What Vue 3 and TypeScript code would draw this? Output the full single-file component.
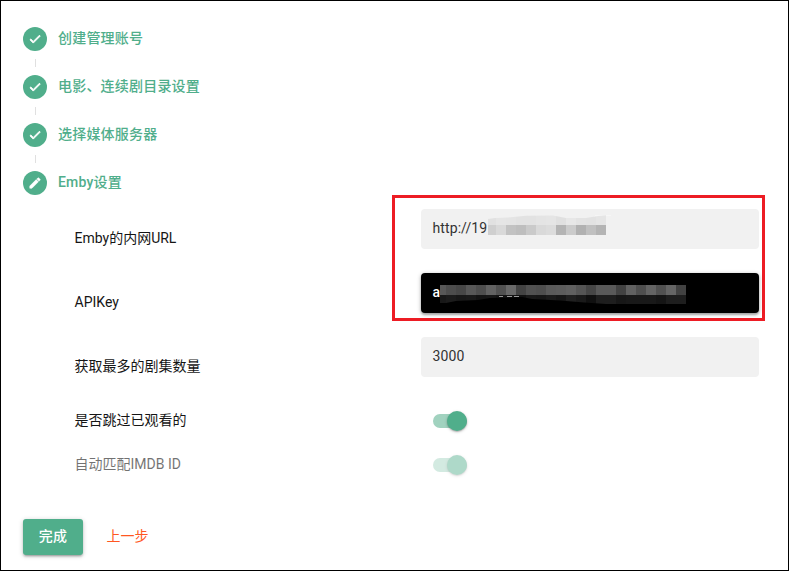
<script setup lang="ts">
import { ref } from 'vue'

interface Step {
  title: string
  icon: 'check' | 'edit'
}
interface Tile {
  x: number
  w: number
  c: string
}

const steps: Step[] = [
  { title: '创建管理账号', icon: 'check' },
  { title: '电影、连续剧目录设置', icon: 'check' },
  { title: '选择媒体服务器', icon: 'check' },
  { title: 'Emby设置', icon: 'edit' },
]

const icons = {
  check: 'M9 16.17L4.83 12l-1.42 1.41L9 19 21 7l-1.41-1.41z',
  edit: 'M3 17.25V21h3.75L17.81 9.94l-3.75-3.75L3 17.25zM20.71 7.04c.39-.39.39-1.02 0-1.41l-2.34-2.34a.9959.9959 0 0 0-1.41 0l-1.83 1.83 3.75 3.75 1.83-1.83z',
}

const skipWatched = ref(true)
const matchImdb = ref(true)

// The first tile has its own width; every following one is 10px wide.
function tiles(first: number, shades: string[]): Tile[] {
  let x = 0
  return shades.map((s, i) => {
    const w = i === 0 ? first : 10
    const tile = { x, w, c: `#${s}${s}${s}` }
    x += w
    return tile
  })
}

const urlTiles = tiles(8, ['cf', 'd9', 'c2', 'be', 'ca', 'd9', 'dc', 'b4', 'cb', 'b1', 'c0', 'b4'])
const urlUpper = tiles(8, ['e1', 'e5', 'e4', 'e2', 'e2', 'e4', 'e5', 'e0', 'e7', 'e3', 'e2', 'e5'])
const keyTiles = tiles(6, ['58', '4d', '47', '58', '4e', '62', '51', '69', '43', '51', '4e', '5a', '5c', '60', '55', '46', '59', '59', '42', '61', '4f', '64', '51', '65', '42'])
const keyLower = tiles(6, ['18', '1c', '18', '1a', '14', '16', '12', '14', '10', '18', '16', '1b', '16', '20', '1a', '10', '1e', '1e', '17', '19', '19', '19', '15', '1e', '1e'])
</script>

<template>
  <main class="page">
    <ol class="steps">
      <li v-for="step in steps" :key="step.title" class="step">
        <span class="dot">
          <svg :class="step.icon" viewBox="0 0 24 24"><path :d="icons[step.icon]" /></svg>
        </span>
        <span class="title">{{ step.title }}</span>
      </li>
    </ol>

    <section class="form">
      <div class="row">
        <span class="label">Emby的内网URL</span>
      </div>
      <div class="row">
        <span class="label">APIKey</span>
      </div>
      <div class="row">
        <span class="label">获取最多的剧集数量</span>
        <div class="field"><span>3000</span></div>
      </div>
      <div class="row compact">
        <span class="label">是否跳过已观看的</span>
        <button class="toggle" :class="{ on: skipWatched }" @click="skipWatched = !skipWatched">
          <i class="thumb"></i>
        </button>
      </div>
      <div class="row compact disabled">
        <span class="label">自动匹配IMDB ID</span>
        <button class="toggle" :class="{ on: matchImdb }" disabled><i class="thumb"></i></button>
      </div>
      <div class="highlight">
        <div class="field">
          <span>http://19</span>
          <svg class="mask url-mask" width="130" height="20" viewBox="0 0 130 20" shape-rendering="crispEdges">
            <clipPath id="url-edge">
              <path d="M0 4L7 3L20 2.6L38 .8L65 .5L78 3L98 3L110 1L118 .3V10H0z" />
            </clipPath>
            <path d="M108 0H125L118 1.5H106z" fill="#f6f6f6" />
            <g clip-path="url(#url-edge)">
              <rect v-for="t in urlUpper" :key="t.x" :x="t.x" y="0" :width="t.w" height="10" :fill="t.c" />
            </g>
            <rect v-for="t in urlTiles" :key="t.x" :x="t.x" y="10" :width="t.w" height="10" :fill="t.c" />
          </svg>
        </div>
        <div class="field dark">
          <span>a</span>
          <svg class="mask key-mask" width="246" height="19" viewBox="0 0 246 19" shape-rendering="crispEdges">
            <clipPath id="key-edge">
              <path d="M0 10H246V19H166L144 17.5L120 15.5L92 14L82 12L50 13L38 15L16 16L6 18H0z" />
            </clipPath>
            <g clip-path="url(#key-edge)">
              <rect v-for="t in keyLower" :key="t.x" :x="t.x" y="10" :width="t.w" height="9" :fill="t.c" />
            </g>
            <rect v-for="t in keyTiles" :key="t.x" :x="t.x" y="0" :width="t.w" height="10" :fill="t.c" />
            <path d="M59 11.5h4M67 11.5h5M74 11.5h5" stroke="#999" />
          </svg>
        </div>
      </div>
    </section>

    <footer class="actions">
      <button class="primary">完成</button>
      <button class="flat">上一步</button>
    </footer>
  </main>
</template>

<style>
body {
  margin: 0;
  background: #fff;
}
</style>

<style scoped>
.page {
  box-sizing: border-box;
  width: 789px;
  height: 571px;
  border: 1px solid #000;
  padding: 26px 29px 15px 22px;
  background: #fff;
  color: #151515;
  font-family: Roboto, 'Noto Sans CJK SC', sans-serif;
  font-size: 14px;
  line-height: 20px;
  display: flex;
  flex-direction: column;
}
button {
  border: 0;
  margin: 0;
  padding: 0;
  background: none;
  font: inherit;
}
.steps {
  list-style: none;
  margin: 0;
  padding: 0;
  display: flex;
  flex-direction: column;
  gap: 24px;
}
.step {
  position: relative;
  display: flex;
  align-items: center;
  gap: 11px;
  height: 24px;
  color: #50ae8b;
  font-weight: 500;
  letter-spacing: 0.2px;
}
.step:not(:last-child)::after {
  content: '';
  position: absolute;
  left: 12px;
  top: 32px;
  width: 1px;
  height: 8px;
  background: #e0e0e0;
}
.dot {
  width: 24px;
  height: 24px;
  border-radius: 50%;
  background: #50ae8b;
  display: flex;
  align-items: center;
  justify-content: center;
}
.dot svg {
  width: 14px;
  height: 14px;
  fill: #fff;
  stroke: #fff;
}
.dot .check {
  stroke-width: 1.6;
}
.dot .edit {
  stroke-width: 0.9;
}
.title {
  position: relative;
  top: -1px;
}
.form {
  position: relative;
  display: flex;
  flex-direction: column;
  margin-top: 14px;
  padding-left: 51.5px;
}
.row {
  display: grid;
  grid-template-columns: 346.5px 338px;
  height: 40px;
  margin-bottom: 24px;
}
.label {
  padding-top: 19px;
}
.row.compact {
  height: 40px;
  margin-bottom: 4px;
}
.row.compact .label {
  padding-top: 9px;
}
.row.disabled .label {
  opacity: 0.6;
}
.row.disabled .toggle {
  opacity: 0.46;
}
.field {
  position: relative;
  box-sizing: border-box;
  height: 40px;
  padding: 9px 11.5px;
  border-radius: 4px;
  background: #f1f1f1;
  color: #333;
  letter-spacing: 0.1px;
}
.field.dark {
  background: #000;
  color: #fff;
  box-shadow: 0 1px 4px rgba(0, 0, 0, 0.3), 0 2px 2px rgba(0, 0, 0, 0.2);
}
.dark span {
  font-weight: 500;
}
.highlight {
  position: absolute;
  left: 369px;
  top: -14px;
  box-sizing: border-box;
  width: 373px;
  height: 126px;
  border: 3px solid #ed1c24;
  padding: 11px 3px 0 26px;
  display: flex;
  flex-direction: column;
  gap: 24px;
}
.mask {
  position: absolute;
}
.url-mask {
  left: 67px;
  top: 6px;
}
.key-mask {
  left: 19px;
  top: 12px;
}
.toggle {
  position: relative;
  width: 34px;
  height: 14px;
  margin: 13px 0 0 12px;
  border-radius: 7px;
  background: #bbb;
}
.toggle.on {
  background: #a1d2bf;
}
.thumb {
  position: absolute;
  left: 0;
  top: -3px;
  width: 20px;
  height: 20px;
  border-radius: 50%;
  background: #fff;
  box-shadow: 0 1px 3px rgba(0, 0, 0, 0.25), 0 1px 1px rgba(0, 0, 0, 0.14);
}
.toggle.on .thumb {
  left: 14px;
  background: #50ae8b;
}
.actions {
  display: flex;
  margin-top: auto;
  gap: 8px;
}
.actions button {
  height: 36px;
  padding: 0 15px 2px;
  border-radius: 3px;
  font-weight: 500;
  letter-spacing: 0.2px;
  white-space: nowrap;
}
.actions .primary {
  width: 60px;
  background: #50ae8b;
  color: #fff;
  box-shadow: 0 1px 5px rgba(0, 0, 0, 0.2), 0 2px 2px rgba(0, 0, 0, 0.14), 0 3px 1px -2px rgba(0, 0, 0, 0.12);
}
.actions .flat {
  color: #ff5722;
  padding: 0 15.5px 2px;
  font-weight: 400;
  letter-spacing: 0;
}
</style>
